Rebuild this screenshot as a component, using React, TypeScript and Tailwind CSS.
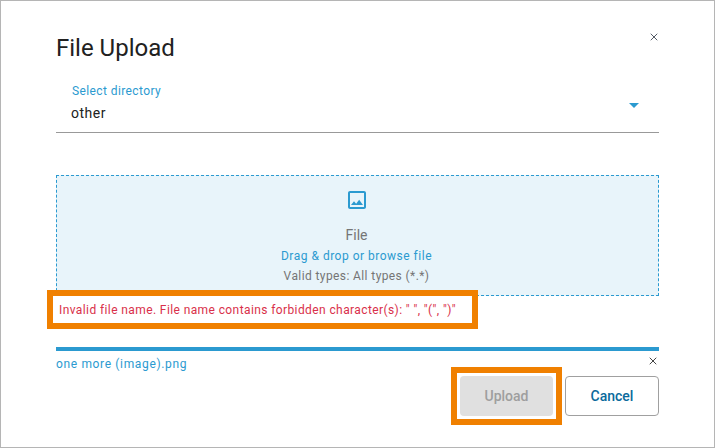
import { X } from 'lucide-react'

const font = { fontFamily: 'Roboto, sans-serif' }

export default function App() {
  return (
    <div
      className="relative w-[715px] h-[448px] overflow-hidden bg-white border border-[#b5b5b5] pl-[55px] pr-[55px] pt-[33px]"
      style={font}
    >
      <button className="absolute left-[647px] top-[30px] text-[#555b66]" aria-label="Close">
        <X size={12} strokeWidth={2} />
      </button>

      <h1 className="text-[24px] leading-[28px] text-[#212121]">File Upload</h1>

      {/* Directory select */}
      <div className="relative mt-[20px] h-[51px] border-b border-[#999999] pl-[15px] pt-[1px]">
        <div className="pl-[1px] text-[12px] leading-[16px] tracking-[0.4px] text-[#2b9ad0]">Select directory</div>
        <div className="mt-[4px] text-[14px] leading-[20px] tracking-[0.5px] text-[#212121]">other</div>
        <svg className="absolute right-[20px] top-[21px]" width="10" height="5" viewBox="0 0 10 5">
          <path d="M0 0h10L5 5z" fill="#2b9ad0" />
        </svg>
      </div>

      {/* Drop zone */}
      <div className="mt-[42px] h-[121px] border border-dashed border-[#2b9ad0] bg-[#e8f4fa] flex flex-col items-center pt-[12px] pr-[2px]">
        <svg width="24" height="24" viewBox="0 0 24 24" fill="#2b9ad0">
          <path d="M19 5v14H5V5h14m0-2H5c-1.1 0-2 .9-2 2v14c0 1.1.9 2 2 2h14c1.100 0 2-.9 2-2V5c0-1.100-.9-2-2-2z" />
          <path d="M14.140 11.860l-3 3.870L9 13.140 6 17h12l-3.860-5.140z" />
        </svg>
        <div className="mt-[13px] text-[14px] leading-[20px] text-[#757575]">File</div>
        <div className="mt-[1px] text-[12px] leading-[20px] tracking-[0.5px] text-[#2b9ad0]">Drag &amp; drop or browse file</div>
        <div className="text-[12px] leading-[20px] tracking-[0.4px] text-[#757575]">Valid types: All types (*.*)</div>
      </div>

      {/* Validation message */}
      <div className="h-[28px] pl-[3px] text-[12px] leading-[28px] tracking-[0.4px] text-[#d9304a] whitespace-nowrap">
        Invalid file name. File name contains forbidden character(s): " ", "(", ")"
      </div>

      {/* Upload progress */}
      <div className="relative mt-[23px]">
        <div className="h-[4px] bg-[#2b9ad0]" />
        <div className="mt-[5px] text-[12px] leading-[16px] tracking-[0.65px] text-[#2b9ad0]">one more (image).png</div>
        <button className="absolute right-0 top-[8px] text-[#444444]" aria-label="Remove file">
          <X size={12} strokeWidth={2} />
        </button>
      </div>

      {/* Actions */}
      <div className="mt-[4px] flex justify-end gap-[12px]">
        <button className="w-[93px] h-[40px] rounded-[4px] bg-[#e0e0e0] text-[14px] font-medium text-[#9e9e9e]">Upload</button>
        <button className="w-[94px] h-[40px] rounded-[4px] border border-[#a0a0a0] bg-white text-[14px] font-medium text-[#0a6a9c]">Cancel</button>
      </div>

      {/* Orange annotation frames */}
      <div className="absolute left-[46px] top-[289px] w-[431px] h-[39px] border-[6px] border-[#f08000]" />
      <div className="absolute left-[450px] top-[366px] w-[111px] h-[58px] border-[6px] border-[#f08000]" />
    </div>
  )
}
